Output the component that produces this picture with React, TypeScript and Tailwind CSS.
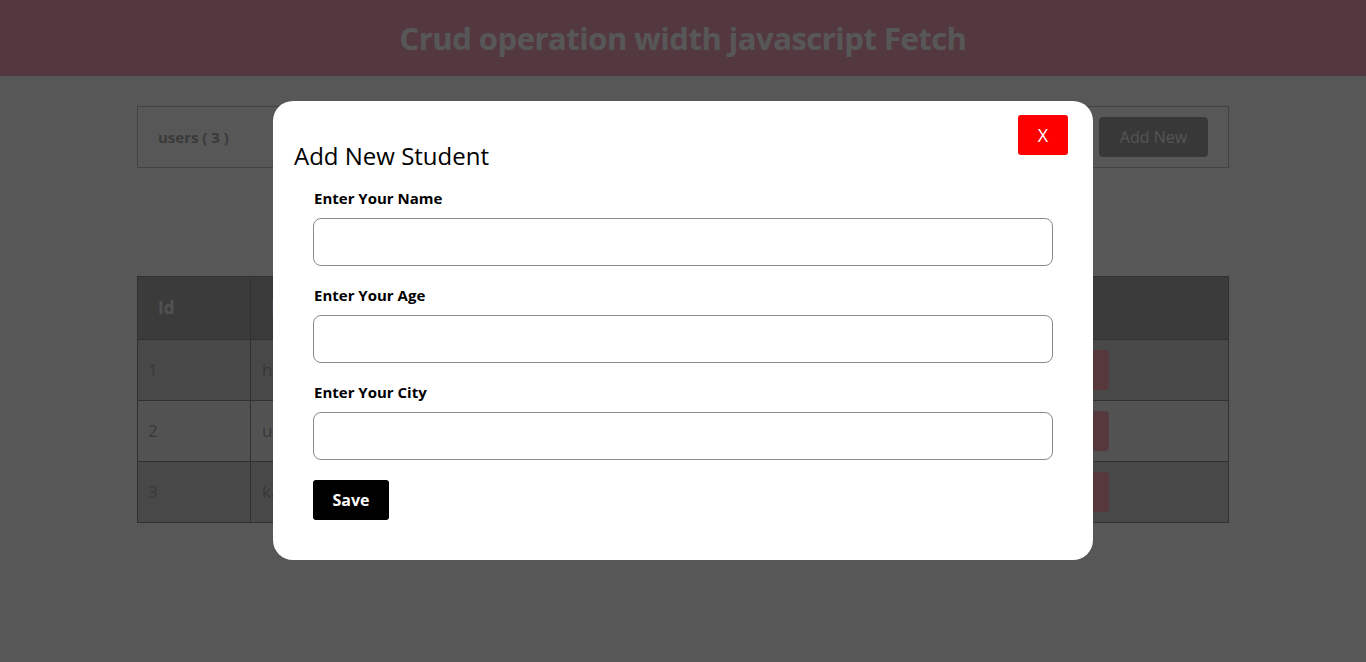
import React from "react";

const rows = [
  { id: 1, name: "harsh", age: 22, city: "Delhi" },
  { id: 2, name: "umesh", age: 24, city: "Pune" },
  { id: 3, name: "kamal", age: 26, city: "Jaipur" },
];

export default function App() {
  const font = { fontFamily: '"Open Sans", "DejaVu Sans", sans-serif' };
  return (
    <div className="relative min-h-[662px] w-full bg-white" style={font}>
      <header className="h-[76px] bg-[#f6a4bb] flex items-center justify-center">
        <h1 className="text-[31px] font-bold text-white leading-none tracking-[-0.5px]">Crud operation width javascript Fetch</h1>
      </header>

      <main className="mx-[137px] pt-[30px]">
        <div className="h-[62px] border border-[#c0c0c0] flex items-center justify-between pl-[20px] pr-[20px]">
          <span className="text-[15px] font-bold text-[#aaaaaa]">users ( 3 )</span>
          <button className="w-[109px] h-[40px] rounded-[4px] bg-[#a5a5a5] text-[#f1f1f1] text-[16px]">Add New</button>
        </div>

        <table className="mt-[108px] w-full border-collapse border border-[#909090] text-[17px]">
          <thead>
            <tr className="bg-[#adadad] h-[63px] text-left">
              <th className="w-[113px] pl-[20px] font-bold text-[#eeeeee] border border-[#909090]">Id</th>
              <th className="pl-[20px] font-bold text-[#eeeeee] border border-[#909090]">Name</th>
              <th className="pl-[20px] font-bold text-[#eeeeee] border border-[#909090]">Age</th>
              <th className="pl-[20px] font-bold text-[#eeeeee] border border-[#909090]">City</th>
              <th className="w-[190px] font-bold text-[#eeeeee] border border-[#909090]"></th>
            </tr>
          </thead>
          <tbody>
            {rows.map((r, i) => (
              <tr key={r.id} className={i % 2 === 1 ? "bg-[#f1f1f1] h-[61px]" : "bg-[#d2d2d2] h-[61px]"}>
                <td className="pl-[10px] text-[#a5a5a5] border border-[#909090]">{r.id}</td>
                <td className="pl-[11px] text-[#a5a5a5] border border-[#909090]">{r.name}</td>
                <td className="pl-[11px] text-[#a5a5a5] border border-[#909090]">{r.age}</td>
                <td className="pl-[11px] text-[#a5a5a5] border border-[#909090]">{r.city}</td>
                <td className="border border-[#909090]">
                  <div className="flex gap-2 pl-[10px]">
                    <span className="w-[60px] h-[40px] rounded-[4px] bg-[#ffa5b0]"></span>
                  </div>
                </td>
              </tr>
            ))}
          </tbody>
        </table>
      </main>

      <div className="absolute inset-0 bg-[rgba(0,0,0,0.66)]">
        <div className="relative ml-[273px] mt-[101px] w-[820px] rounded-[20px] bg-white pt-[41px] pb-[40px]">
          <button className="absolute top-[14px] right-[25px] w-[50px] h-[40px] rounded-[3px] bg-[#ff0000] text-white text-[18px]">X</button>
          <h2 className="pl-[21px] text-[24px] leading-[28px] font-medium text-black">Add New Student</h2>
          <form className="px-[40px] mt-[19px]">
            {["Enter Your Name", "Enter Your Age", "Enter Your City"].map((l, i) => (
              <div key={l} className={i === 0 ? "" : "mt-[20px]"}>
                <label className="block pl-[1px] text-[15px] leading-[18px] font-bold text-black">{l}</label>
                <input className="mt-[11px] block w-[740px] h-[48px] rounded-[8px] border border-[#8a8a8a] outline-none" />
              </div>
            ))}
            <button type="button" className="mt-[20px] w-[76px] h-[40px] rounded-[3px] bg-black text-white text-[16px] font-bold">Save</button>
          </form>
        </div>
      </div>
    </div>
  );
}
